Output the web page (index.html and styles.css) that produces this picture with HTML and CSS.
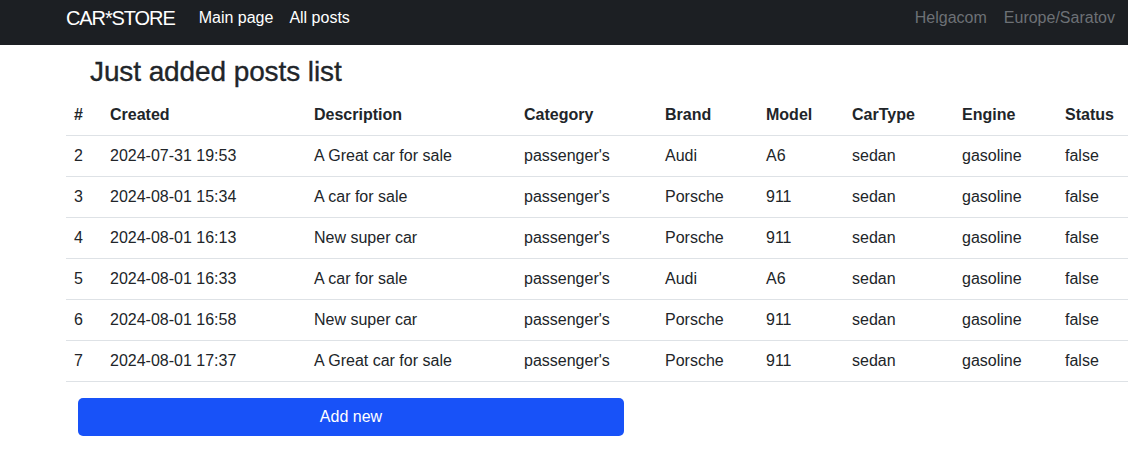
FILE: index.html
```html
<!DOCTYPE html>
<html lang="en">
<head>
<meta charset="utf-8">
<title>CAR*STORE</title>
<link rel="stylesheet" href="styles.css">
</head>
<body>
<nav class="navbar">
  <div class="nav-left">
    <a class="brand" href="#">CAR*STORE</a>
    <a class="nav-link" href="#">Main page</a>
    <a class="nav-link" href="#">All posts</a>
  </div>
  <div class="nav-right">
    <span class="nav-muted">Helgacom</span>
    <span class="nav-muted">Europe/Saratov</span>
  </div>
</nav>
<main class="content">
  <h3 class="title">Just added posts list</h3>
  <table class="posts">
    <colgroup>
      <col class="c-num"><col class="c-created"><col class="c-desc"><col class="c-cat"><col class="c-brand"><col class="c-model"><col class="c-type"><col class="c-engine"><col class="c-status">
    </colgroup>
    <thead>
      <tr><th>#</th><th>Created</th><th>Description</th><th>Category</th><th>Brand</th><th>Model</th><th>CarType</th><th>Engine</th><th>Status</th></tr>
    </thead>
    <tbody>
      <tr><td>2</td><td>2024-07-31 19:53</td><td>A Great car for sale</td><td>passenger's</td><td>Audi</td><td>A6</td><td>sedan</td><td>gasoline</td><td>false</td></tr>
      <tr><td>3</td><td>2024-08-01 15:34</td><td>A car for sale</td><td>passenger's</td><td>Porsche</td><td>911</td><td>sedan</td><td>gasoline</td><td>false</td></tr>
      <tr><td>4</td><td>2024-08-01 16:13</td><td>New super car</td><td>passenger's</td><td>Porsche</td><td>911</td><td>sedan</td><td>gasoline</td><td>false</td></tr>
      <tr><td>5</td><td>2024-08-01 16:33</td><td>A car for sale</td><td>passenger's</td><td>Audi</td><td>A6</td><td>sedan</td><td>gasoline</td><td>false</td></tr>
      <tr><td>6</td><td>2024-08-01 16:58</td><td>New super car</td><td>passenger's</td><td>Porsche</td><td>911</td><td>sedan</td><td>gasoline</td><td>false</td></tr>
      <tr><td>7</td><td>2024-08-01 17:37</td><td>A Great car for sale</td><td>passenger's</td><td>Porsche</td><td>911</td><td>sedan</td><td>gasoline</td><td>false</td></tr>
    </tbody>
  </table>
  <button class="btn-add" type="button">Add new</button>
</main>
</body>
</html>
```

FILE: styles.css
```css
* { box-sizing: border-box; }
html, body { margin: 0; padding: 0; }
body {
  font-family: "Liberation Sans", Arial, sans-serif;
  font-size: 16px;
  line-height: 24px;
  color: #212529;
  background: #fff;
}
a { text-decoration: none; }

.navbar {
  height: 45px;
  background: #1c1f23;
  display: flex;
  justify-content: space-between;
  align-items: flex-start;
  padding: 0 13px 0 66px;
}
.nav-left, .nav-right {
  display: flex;
  align-items: center;
  height: 35px;
}
.brand {
  color: #fff;
  font-size: 20px;
  letter-spacing: -1.1px;
  margin-right: 24px;
}
.nav-link {
  color: #fff;
  margin-right: 16px;
}
.nav-right { gap: 17px; }
.nav-muted { color: #6d7176; }

.content {
  padding: 0 0 0 66px;
}
.title {
  margin: 10px 0 6px 24px;
  font-size: 28px;
  font-weight: 400;
  line-height: 34px;
  letter-spacing: -0.1px;
  -webkit-text-stroke: 0.35px #212529;
}

.posts {
  width: 100%;
  border-collapse: collapse;
  table-layout: fixed;
}
.c-num { width: 36px; }
.c-created { width: 204px; }
.c-desc { width: 210px; }
.c-cat { width: 141px; }
.c-brand { width: 101px; }
.c-model { width: 86px; }
.c-type { width: 110px; }
.c-engine { width: 103px; }
.c-status { width: auto; }
.posts th, .posts td {
  text-align: left;
  padding: 8px;
  line-height: 24px;
  border-bottom: 1px solid #dee2e6;
  white-space: nowrap;
}
.posts th { font-weight: 700; }

.btn-add {
  display: block;
  margin: 16px 0 0 12px;
  width: 546px;
  height: 38px;
  border: none;
  border-radius: 5px;
  background: #1852f8;
  color: #fff;
  font-family: inherit;
  font-size: 16px;
  line-height: 24px;
}
```
